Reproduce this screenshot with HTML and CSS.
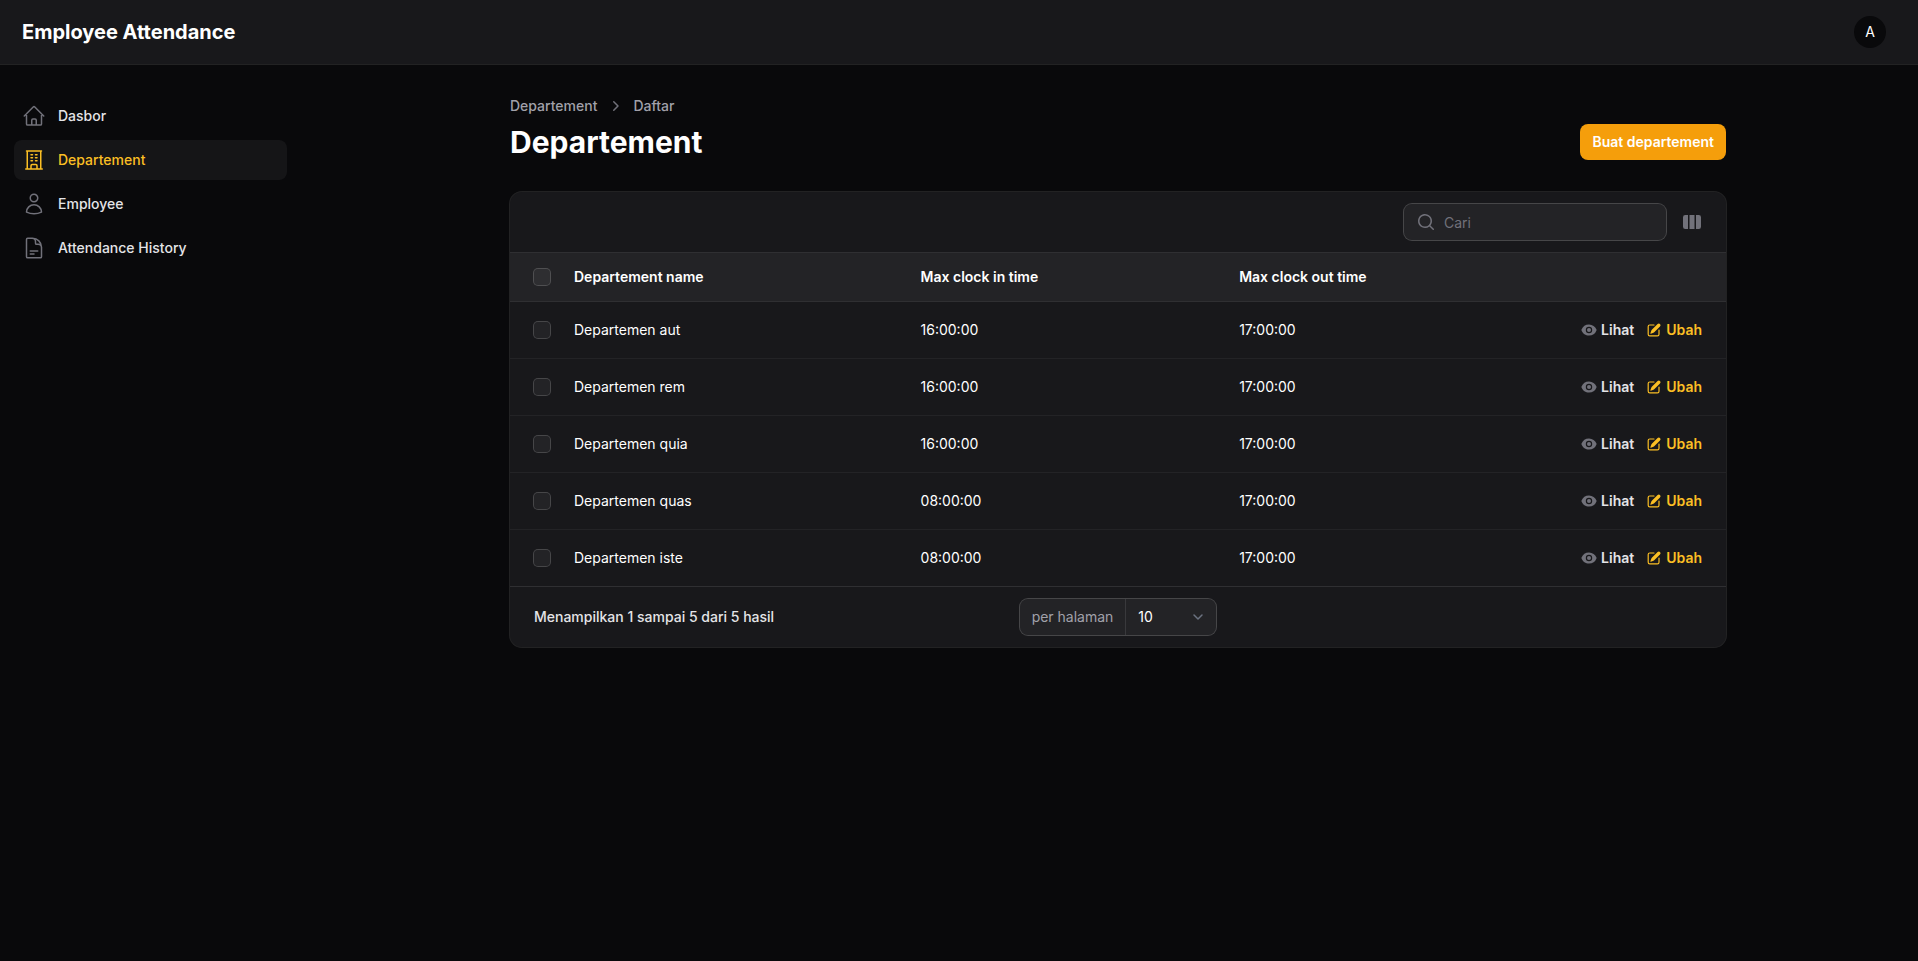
FILE: index.html
```
<!DOCTYPE html>
<html lang="id">
<head>
<meta charset="utf-8">
<meta name="viewport" content="width=device-width, initial-scale=1">
<title>Departement - Employee Attendance</title>
<link rel="stylesheet" href="styles.css">
</head>
<body>
<svg class="sprite" aria-hidden="true">
  <symbol id="eye" viewBox="0 0 20 20"><path d="M10 12.5a2.5 2.5 0 1 0 0-5 2.5 2.5 0 0 0 0 5Z"/><path fill-rule="evenodd" clip-rule="evenodd" d="M.664 10.59a1.651 1.651 0 0 1 0-1.186A10.004 10.004 0 0 1 10 3c4.257 0 7.893 2.66 9.336 6.41.147.381.146.804 0 1.186A10.004 10.004 0 0 1 10 17c-4.257 0-7.893-2.66-9.336-6.41ZM14 10a4 4 0 1 1-8 0 4 4 0 0 1 8 0Z"/></symbol>
  <symbol id="pencil" viewBox="0 0 20 20"><path d="m5.433 13.917 1.262-3.155A4 4 0 0 1 7.58 9.42l6.92-6.918a2.121 2.121 0 0 1 3 3l-6.92 6.918c-.383.383-.84.685-1.343.886l-3.154 1.262a.5.5 0 0 1-.65-.65Z"/><path d="M3.5 5.75c0-.69.56-1.25 1.25-1.25H10A.75.75 0 0 0 10 3H4.75A2.75 2.75 0 0 0 2 5.75v9.5A2.75 2.75 0 0 0 4.75 18h9.5A2.75 2.75 0 0 0 17 15.25V10a.75.75 0 0 0-1.5 0v5.25c0 .69-.56 1.25-1.25 1.25h-9.5c-.69 0-1.25-.56-1.25-1.25v-9.5Z"/></symbol>
</svg>

<header class="topbar">
  <a class="brand" href="#">Employee Attendance</a>
  <button class="avatar" type="button" aria-label="Menu pengguna">A</button>
</header>

<div class="layout">
  <nav class="sidebar" aria-label="Navigasi">
    <ul class="nav-list">
      <li><a class="nav-item" href="#">
        <svg class="nav-icon" viewBox="0 0 24 24"><path d="m2.25 12 8.954-8.955c.44-.439 1.152-.439 1.591 0L21.75 12M4.5 9.75v10.125c0 .621.504 1.125 1.125 1.125H9.75v-4.875c0-.621.504-1.125 1.125-1.125h2.25c.621 0 1.125.504 1.125 1.125V21h4.125c.621 0 1.125-.504 1.125-1.125V9.75M8.25 21h8.25"/></svg>
        <span>Dasbor</span></a></li>
      <li><a class="nav-item active" href="#" aria-current="page">
        <svg class="nav-icon" viewBox="0 0 24 24"><path d="M3.75 21h16.5M4.5 3h15M5.25 3v18m13.5-18v18M9 6.75h1.5m-1.5 3h1.5m-1.5 3h1.5m3-6H15m-1.5 3H15m-1.5 3H15M9 21v-3.375c0-.621.504-1.125 1.125-1.125h3.75c.621 0 1.125.504 1.125 1.125V21"/></svg>
        <span>Departement</span></a></li>
      <li><a class="nav-item" href="#">
        <svg class="nav-icon" viewBox="0 0 24 24"><path d="M15.75 6a3.75 3.75 0 1 1-7.5 0 3.75 3.75 0 0 1 7.5 0ZM4.501 20.118a7.5 7.5 0 0 1 14.998 0A17.933 17.933 0 0 1 12 21.75c-2.676 0-5.216-.584-7.499-1.632Z"/></svg>
        <span>Employee</span></a></li>
      <li><a class="nav-item" href="#">
        <svg class="nav-icon" viewBox="0 0 24 24"><path d="M19.5 14.25v-2.625a3.375 3.375 0 0 0-3.375-3.375h-1.5A1.125 1.125 0 0 1 13.5 7.125v-1.5a3.375 3.375 0 0 0-3.375-3.375H8.25m0 12.75h7.5m-7.5 3H12M10.5 2.25H5.625c-.621 0-1.125.504-1.125 1.125v17.25c0 .621.504 1.125 1.125 1.125h12.75c.621 0 1.125-.504 1.125-1.125V11.25a9 9 0 0 0-9-9Z"/></svg>
        <span>Attendance History</span></a></li>
    </ul>
  </nav>

  <main class="main">
    <div class="page-header">
      <div class="page-heading">
        <nav class="breadcrumbs" aria-label="Breadcrumb">
          <a href="#">Departement</a>
          <svg class="crumb-icon" viewBox="0 0 20 20"><path fill-rule="evenodd" clip-rule="evenodd" d="M8.22 5.22a.75.75 0 0 1 1.06 0l4.25 4.25a.75.75 0 0 1 0 1.06l-4.25 4.25a.75.75 0 0 1-1.06-1.06L11.94 10 8.22 6.28a.75.75 0 0 1 0-1.06Z"/></svg>
          <a href="#">Daftar</a>
        </nav>
        <h1>Departement</h1>
      </div>
      <button class="btn-primary" type="button">Buat departement</button>
    </div>

    <section class="card">
      <div class="toolbar">
        <label class="search">
          <svg class="search-icon" viewBox="0 0 20 20"><path fill-rule="evenodd" clip-rule="evenodd" d="M9 3.5a5.5 5.5 0 1 0 0 11 5.5 5.5 0 0 0 0-11ZM2 9a7 7 0 1 1 12.452 4.391l3.328 3.329a.75.75 0 1 1-1.06 1.06l-3.329-3.328A7 7 0 0 1 2 9Z"/></svg>
          <input type="text" placeholder="Cari" aria-label="Cari">
        </label>
        <button class="columns-btn" type="button" aria-label="Kolom">
          <svg viewBox="0 0 20 20"><path d="M14 17h2.75A2.25 2.25 0 0 0 19 14.75v-9.5A2.25 2.25 0 0 0 16.75 3H14v14ZM12.5 3h-5v14h5V3ZM3.25 3H6v14H3.25A2.25 2.25 0 0 1 1 14.75v-9.5A2.25 2.25 0 0 1 3.25 3Z"/></svg>
        </button>
      </div>

      <table class="table">
        <thead>
          <tr>
            <th class="check-cell"><input type="checkbox" aria-label="Pilih semua"></th>
            <th class="name-cell">Departement name</th>
            <th class="time-cell">Max clock in time</th>
            <th>Max clock out time</th>
            <th class="actions-cell" aria-label="Tindakan"></th>
          </tr>
        </thead>
        <tbody>
          <tr>
            <td class="check-cell"><input type="checkbox" aria-label="Pilih Departemen aut"></td>
            <td>Departemen aut</td><td>16:00:00</td><td>17:00:00</td>
            <td class="actions-cell"><div class="actions"><a class="action" href="#"><svg><use href="#eye"/></svg>Lihat</a><a class="action edit" href="#"><svg><use href="#pencil"/></svg>Ubah</a></div></td>
          </tr>
          <tr>
            <td class="check-cell"><input type="checkbox" aria-label="Pilih Departemen rem"></td>
            <td>Departemen rem</td><td>16:00:00</td><td>17:00:00</td>
            <td class="actions-cell"><div class="actions"><a class="action" href="#"><svg><use href="#eye"/></svg>Lihat</a><a class="action edit" href="#"><svg><use href="#pencil"/></svg>Ubah</a></div></td>
          </tr>
          <tr>
            <td class="check-cell"><input type="checkbox" aria-label="Pilih Departemen quia"></td>
            <td>Departemen quia</td><td>16:00:00</td><td>17:00:00</td>
            <td class="actions-cell"><div class="actions"><a class="action" href="#"><svg><use href="#eye"/></svg>Lihat</a><a class="action edit" href="#"><svg><use href="#pencil"/></svg>Ubah</a></div></td>
          </tr>
          <tr>
            <td class="check-cell"><input type="checkbox" aria-label="Pilih Departemen quas"></td>
            <td>Departemen quas</td><td>08:00:00</td><td>17:00:00</td>
            <td class="actions-cell"><div class="actions"><a class="action" href="#"><svg><use href="#eye"/></svg>Lihat</a><a class="action edit" href="#"><svg><use href="#pencil"/></svg>Ubah</a></div></td>
          </tr>
          <tr>
            <td class="check-cell"><input type="checkbox" aria-label="Pilih Departemen iste"></td>
            <td>Departemen iste</td><td>08:00:00</td><td>17:00:00</td>
            <td class="actions-cell"><div class="actions"><a class="action" href="#"><svg><use href="#eye"/></svg>Lihat</a><a class="action edit" href="#"><svg><use href="#pencil"/></svg>Ubah</a></div></td>
          </tr>
        </tbody>
      </table>

      <div class="pagination">
        <span class="summary">Menampilkan 1 sampai 5 dari 5 hasil</span>
        <div class="per-page">
          <label for="per-page">per halaman</label>
          <div class="select-wrap">
            <select id="per-page"><option>5</option><option selected>10</option><option>25</option><option>50</option></select>
            <svg class="select-icon" viewBox="0 0 20 20"><path d="m6 8 4 4 4-4"/></svg>
          </div>
        </div>
      </div>
    </section>
  </main>
</div>
</body>
</html>
```
FILE: styles.css
```
*, *::before, *::after { box-sizing: border-box; }

body {
  margin: 0;
  min-height: 100vh;
  background: #09090b;
  color: #fff;
  font-family: Inter, "Liberation Sans", sans-serif;
  font-size: 14px;
  line-height: 20px;
}

a { color: inherit; text-decoration: none; }
button, input, select { font: inherit; color: inherit; }
svg { display: block; flex-shrink: 0; fill: currentColor; }
.sprite { display: none; }

.topbar {
  display: flex;
  align-items: center;
  justify-content: space-between;
  height: 64px;
  padding: 0 32px 0 22px;
  background: #18181b;
  box-shadow: 0 0 0 1px rgba(255, 255, 255, 0.1);
}
.brand { font-size: 20px; font-weight: 700; }
.avatar {
  width: 32px;
  height: 32px;
  padding: 0;
  border: 0;
  border-radius: 50%;
  background: #09090b;
}

.layout { display: flex; align-items: flex-start; }

.sidebar { flex: 0 0 318px; padding: 32px 31px 32px 14px; }
.nav-list {
  display: flex;
  flex-direction: column;
  gap: 4px;
  margin: 0;
  padding: 0;
  list-style: none;
}
.nav-item {
  display: flex;
  align-items: center;
  gap: 12px;
  padding: 8px;
  border-radius: 8px;
  color: #e4e4e7;
  font-weight: 500;
}
.nav-icon {
  width: 24px;
  height: 24px;
  fill: none;
  stroke: #71717a;
  stroke-width: 1.5;
  stroke-linecap: round;
  stroke-linejoin: round;
}
.nav-item.active { background: rgba(255, 255, 255, 0.05); color: #fbbf24; }
.nav-item.active .nav-icon { stroke: #fbbf24; }

.main {
  flex: 1;
  max-width: 1280px;
  min-width: 0;
  margin: 0 auto;
  padding: 32px;
}

.page-header {
  display: flex;
  align-items: flex-end;
  justify-content: space-between;
  margin-bottom: 32px;
}
.breadcrumbs {
  display: flex;
  align-items: center;
  gap: 8px;
  margin-bottom: 8px;
  color: #a1a1aa;
  font-weight: 500;
}
.crumb-icon { width: 20px; height: 20px; color: #71717a; }
h1 { margin: 0; font-size: 30px; line-height: 36px; font-weight: 700; }
.btn-primary {
  padding: 8px 12px;
  border: 0;
  border-radius: 8px;
  background: #f59e0b;
  font-weight: 600;
}

.card {
  border-radius: 12px;
  background: #18181b;
  box-shadow: 0 0 0 1px rgba(255, 255, 255, 0.1);
}

.toolbar {
  display: flex;
  align-items: center;
  justify-content: flex-end;
  gap: 16px;
  padding: 12px 24px;
}
.search {
  display: flex;
  align-items: center;
  gap: 8px;
  width: 262px;
  padding: 0 12px;
  border-radius: 8px;
  background: rgba(255, 255, 255, 0.05);
  box-shadow: 0 0 0 1px rgba(255, 255, 255, 0.2);
}
.search-icon { width: 20px; height: 20px; color: #71717a; }
.search input {
  flex: 1;
  min-width: 0;
  height: 36px;
  padding: 6px 0;
  border: 0;
  outline: 0;
  background: transparent;
  line-height: 24px;
  appearance: none;
}
.search input::placeholder { color: #71717a; opacity: 1; }
.columns-btn { padding: 0; border: 0; background: none; color: #71717a; }
.columns-btn svg { width: 20px; height: 20px; }

.table { width: 100%; border-collapse: separate; border-spacing: 0; table-layout: fixed; }
.table th, .table td { padding: 0 12px; text-align: left; }
.table th {
  height: 50px;
  border-top: 1px solid rgba(255, 255, 255, 0.1);
  border-bottom: 1px solid rgba(255, 255, 255, 0.1);
  background: rgba(255, 255, 255, 0.05);
  background-clip: padding-box;
  font-weight: 600;
}
.table td { height: 57px; border-bottom: 1px solid rgba(255, 255, 255, 0.05); }
.table tr:last-child td { border-bottom-color: rgba(255, 255, 255, 0.1); }
.table .check-cell { width: 52px; padding-left: 24px; }
.table .name-cell { width: 28.5%; }
.table .time-cell { width: 26.2%; }
.table .actions-cell { padding-right: 24px; }

input[type="checkbox"] {
  display: block;
  width: 16px;
  height: 16px;
  margin: 0;
  border-radius: 4px;
  appearance: none;
  background: rgba(255, 255, 255, 0.05);
  box-shadow: 0 0 0 1px rgba(255, 255, 255, 0.2);
}

.actions { display: flex; justify-content: flex-end; gap: 12px; }
.action {
  display: flex;
  align-items: center;
  gap: 4px;
  color: #e4e4e7;
  font-weight: 600;
}
.action svg { width: 16px; height: 16px; color: #71717a; }
.action.edit, .action.edit svg { color: #fbbf24; }

.pagination {
  display: grid;
  grid-template-columns: 1fr auto 1fr;
  align-items: center;
  padding: 12px 24px;
}
.summary { color: #e4e4e7; font-weight: 500; }
.per-page {
  display: flex;
  align-items: center;
  height: 36px;
  border-radius: 8px;
  background: rgba(255, 255, 255, 0.05);
  box-shadow: 0 0 0 1px rgba(255, 255, 255, 0.2);
}
.per-page label { padding: 0 12px; color: #a1a1aa; }
.select-wrap {
  display: grid;
  align-items: center;
  height: 36px;
  border-left: 1px solid rgba(255, 255, 255, 0.1);
}
.select-wrap > * { grid-area: 1 / 1; }
.select-wrap select {
  width: 90px;
  height: 36px;
  padding: 0 32px 0 12px;
  border: 0;
  outline: 0;
  appearance: none;
  background: transparent;
}
.select-icon {
  width: 20px;
  height: 20px;
  margin-right: 8px;
  justify-self: end;
  pointer-events: none;
  fill: none;
  stroke: #6b7280;
  stroke-width: 1.5;
  stroke-linecap: round;
  stroke-linejoin: round;
}
```
